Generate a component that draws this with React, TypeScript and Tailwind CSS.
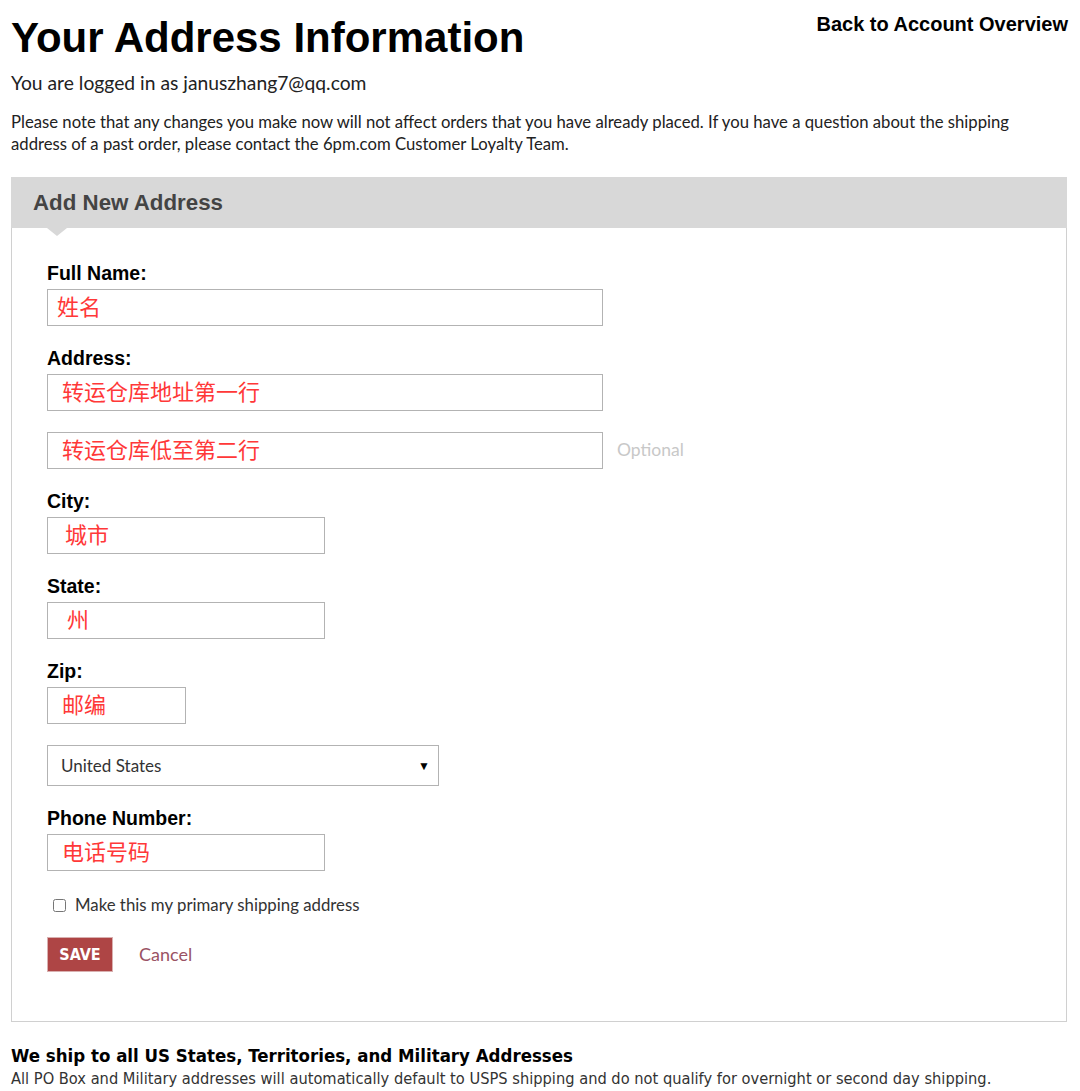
import React from 'react';

// Address form page
const arial = { fontFamily: '"Liberation Sans", Arial, sans-serif' };
const body = { fontFamily: 'Lato, "Open Sans", sans-serif' };
const cjk = { fontFamily: '"Noto Sans CJK SC", "Liberation Sans", sans-serif' };
const narrow = { fontFamily: '"Liberation Sans Narrow", "DejaVu Sans Condensed", "Liberation Sans", sans-serif' };

interface FieldProps {
  label?: string;
  value: string;
  width: string;
  pad: string;
  first?: boolean;
}

const Field = ({ label, value, width, pad, first }: FieldProps) => (
  <div className={first ? '' : 'mt-[22px]'}>
    {label && (
      <div className="text-[19.5px] leading-[20px] font-bold text-black mb-[6px]" style={arial}>
        {label}
      </div>
    )}
    <input
      readOnly
      defaultValue={value}
      className={`${width} ${pad} block h-[37px] pb-[5px] border border-[#b3b3b3] bg-white text-[22px] text-[#ff3838] outline-none`}
      style={cjk}
    />
  </div>
);

export default function App() {
  return (
    <div className="min-h-screen bg-white px-[11px] pt-[13px] text-[#222]">
      <div className="w-[1056px]">
        <div className="flex justify-between items-start">
          <h1 className="text-[42px] leading-[50px] font-bold text-black" style={arial}>
            Your Address Information
          </h1>
          <a className="text-[20px] leading-[22px] font-bold text-black mr-[-1px]" style={arial}>
            Back to Account Overview
          </a>
        </div>

        <p className="mt-[8px] text-[19.3px] leading-[24px] text-[#222]" style={body}>
          You are logged in as januszhang7@qq.com
        </p>

        <p className="mt-[16px] text-[16.7px] leading-[22px] text-[#222]" style={body}>
          Please note that any changes you make now will not affect orders that you have already placed. If you have a question about the shipping
          <br />
          address of a past order, please contact the 6pm.com Customer Loyalty Team.
        </p>

        {/* Panel */}
        <div className="mt-[22px]">
          <div className="relative h-[51px] bg-[#d8d8d8] flex items-center pl-[22px]">
            <h2 className="text-[22.3px] font-bold text-[#444]" style={arial}>
              Add New Address
            </h2>
            <div className="absolute left-[36px] top-[51px] w-0 h-0 border-l-[10px] border-r-[10px] border-t-[8px] border-l-transparent border-r-transparent border-t-[#d8d8d8]" />
          </div>

          <div className="border border-t-0 border-[#d0d0d0] pl-[35px] pt-[35px] pb-[49px]">
            <Field first label="Full Name:" value="姓名" width="w-[556px]" pad="pl-[9px]" />
            <Field label="Address:" value="转运仓库地址第一行" width="w-[556px]" pad="pl-[14px]" />
            <div className="mt-[21px] flex items-center">
              <input
                readOnly
                defaultValue="转运仓库低至第二行"
                className="w-[556px] pl-[14px] h-[37px] pb-[5px] border border-[#b3b3b3] bg-white text-[22px] text-[#ff3838] outline-none"
                style={cjk}
              />
              <span className="ml-[14px] text-[17.5px] text-[#c8c8c8]" style={body}>
                Optional
              </span>
            </div>
            <Field label="City:" value="城市" width="w-[278px]" pad="pl-[17px]" />
            <Field label="State:" value="州" width="w-[278px]" pad="pl-[19px]" />
            <Field label="Zip:" value="邮编" width="w-[139px]" pad="pl-[14px]" />

            <div className="mt-[21px] relative w-[392px]">
              <select
                className="appearance-none w-full h-[41px] border border-[#b3b3b3] bg-white pl-[13px] text-[17px] text-[#333] outline-none"
                style={body}
                defaultValue="US"
              >
                <option value="US">United States</option>
              </select>
              <span className="pointer-events-none absolute right-[9px] top-[12px] text-[12px] text-black">▼</span>
            </div>

            <Field label="Phone Number:" value="电话号码" width="w-[278px]" pad="pl-[14px]" />

            <label className="mt-[24px] flex items-center h-[20px] pl-[6px]">
              <input type="checkbox" className="w-[13px] h-[13px] accent-gray-500" />
              <span className="ml-[9px] text-[16.8px] text-[#333]" style={body}>
                Make this my primary shipping address
              </span>
            </label>

            <div className="mt-[22px] flex items-center">
              <button
                className="w-[66px] h-[35px] bg-[#ae4545] border border-[#d9b0b0] text-white text-[16px] font-bold"
                style={narrow}
              >
                SAVE
              </button>
              <a className="ml-[26px] text-[18px] text-[#9a5364]" style={body}>
                Cancel
              </a>
            </div>
          </div>
        </div>

        {/* Footer note */}
        <div className="mt-[22px]">
          <h3 className="text-[18.5px] leading-[23px] font-bold text-black" style={narrow}>
            We ship to all US States, Territories, and Military Addresses
          </h3>
          <p className="text-[16.3px] leading-[23px] text-[#333] whitespace-nowrap" style={narrow}>
            All PO Box and Military addresses will automatically default to USPS shipping and do not qualify for overnight or second day shipping.
          </p>
        </div>
      </div>
    </div>
  );
}
